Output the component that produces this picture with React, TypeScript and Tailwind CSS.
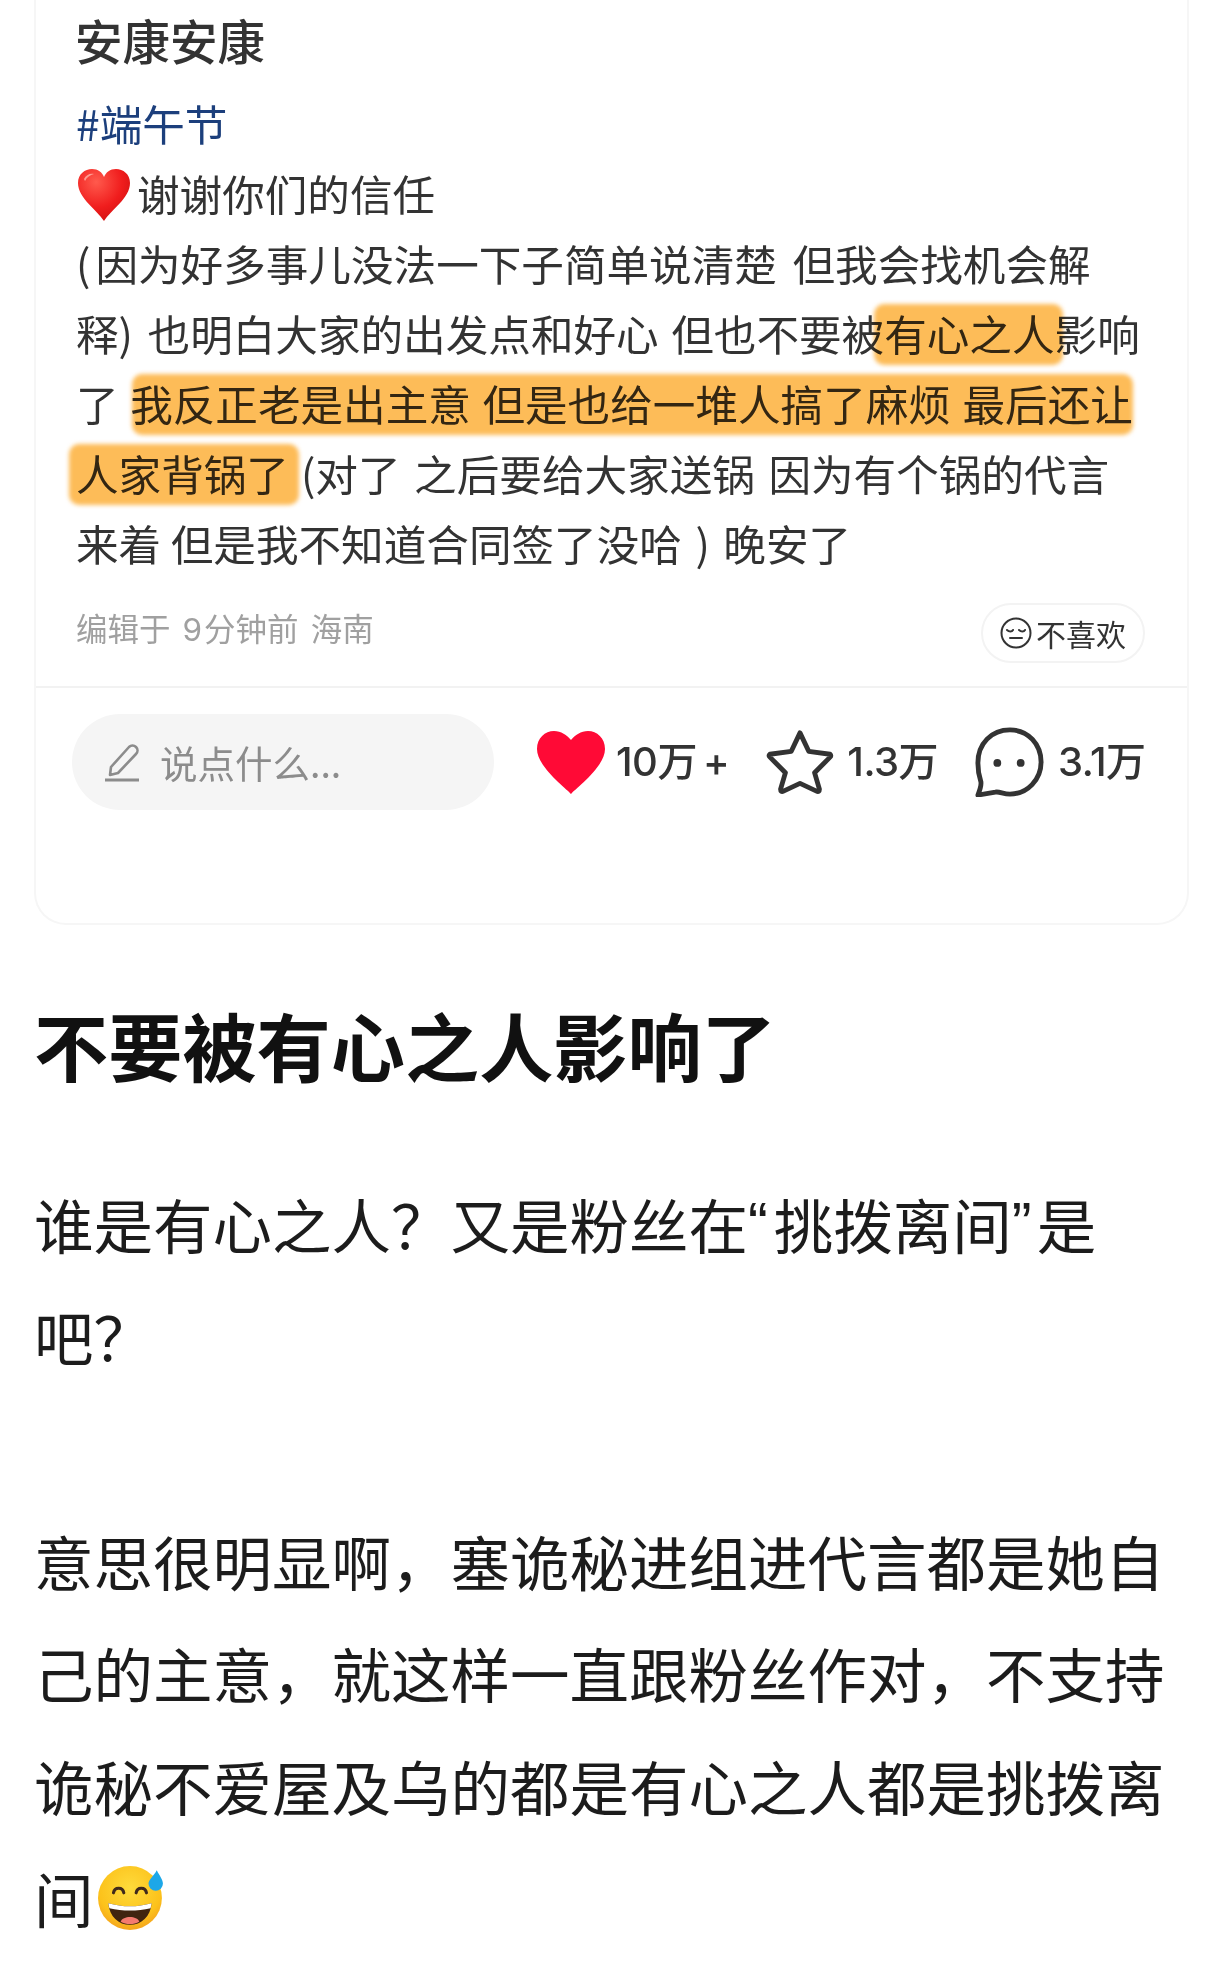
const cjk = "font-['Noto_Sans_CJK_SC','Noto_Sans',sans-serif]";
const num = "font-['Inter','Noto_Sans_CJK_SC',sans-serif]";

function Mark({ className, children }: { className: string; children: React.ReactNode }) {
  return (
    <span className="relative">
      {children}
      <span className={"absolute rounded-[10px] bg-[#fdbc58] mix-blend-multiply blur-[2px] " + className} />
    </span>
  );
}

function HeartEmoji() {
  return (
    <svg viewBox="0 0 54 54" className="h-[54px] w-[54px] shrink-0">
      <defs>
        <radialGradient id="hg" cx="0.35" cy="0.25" r="0.9">
          <stop offset="0" stopColor="#ff5a4d" />
          <stop offset="0.55" stopColor="#f01d1d" />
          <stop offset="1" stopColor="#c80d0d" />
        </radialGradient>
      </defs>
      <path d="M27 53C20 42 1 30 1 15 1 6 8 1 15 1c6 0 10 3 12 8 2-5 6-8 12-8 7 0 14 5 14 14 0 15-19 27-26 38z" fill="url(#hg)" />
      <path d="M7 11c2-4 6-6 10-5-4 1-7 3-9 7z" fill="#ff9d92" />
    </svg>
  );
}

function SweatEmoji() {
  return (
    <svg viewBox="0 0 66 62" className="ml-[3px] h-[64px] w-[68px] shrink-0">
      <defs>
        <radialGradient id="eg" cx="0.5" cy="0.35" r="0.65">
          <stop offset="0" stopColor="#fedb3c" />
          <stop offset="0.75" stopColor="#fcc21b" />
          <stop offset="1" stopColor="#f5a51c" />
        </radialGradient>
      </defs>
      <circle cx="32" cy="31" r="31" fill="url(#eg)" />
      <path d="M16 26c1-6 9-6 10 0M38 26c1-6 9-6 10 0" fill="none" stroke="#40291b" strokeWidth="3" strokeLinecap="round" />
      <path d="M11 36c14 4 28 4 42 0-1 13-10 21-21 21S12 49 11 36z" fill="#40240f" />
      <path d="M11 36c14 4 28 4 42 0l-1 5c-13 3-27 3-40 0z" fill="#fff" />
      <path d="M23 54c2-6 16-6 18 0-5 3-13 3-18 0z" fill="#f47b6f" />
      <path d="M58 4c3 6 6 9 6 13a7 7 0 0 1-14 0c0-4 5-7 8-13z" fill="#1da7e8" />
    </svg>
  );
}

function Pencil() {
  return (
    <svg viewBox="0 0 40 40" className="h-[40px] w-[40px] shrink-0" fill="none" stroke="#8c8c8c" strokeWidth="2.6" strokeLinecap="round" strokeLinejoin="round">
      <path d="M9 25 27 5c2-2 5-2 7 0s2 5 0 7L16 31l-8 2z" />
      <path d="M3 38h34" strokeWidth="3" strokeLinecap="butt" />
    </svg>
  );
}

function Face() {
  return (
    <svg viewBox="0 0 32 32" className="h-[32px] w-[32px] shrink-0" fill="none" stroke="#333" strokeWidth="2" strokeLinecap="round">
      <circle cx="16" cy="16" r="14.5" />
      <path d="M7 13c2 2 5 2 6 0M19 13c2 2 5 2 6 0M10 21h12" />
    </svg>
  );
}

function RedHeart() {
  return (
    <svg viewBox="0 0 70 64" className="h-[64px] w-[70px] shrink-0">
      <path d="M35 64C31 59 1 37 1 19 1 8 9 1 18 1c7 0 13 4 17 9 4-5 10-9 17-9 9 0 17 7 17 18 0 18-30 40-34 45z" fill="#ff0a36" />
    </svg>
  );
}

function Star() {
  return (
    <svg viewBox="0 0 70 68" className="h-[66px] w-[70px] shrink-0" fill="none" stroke="#333" strokeWidth="5" strokeLinejoin="round">
      <path d="M35 4 44 23 66 26c1 1 1 2 0 3L50 45 55 62c0 2-1 3-3 2L35 56 18 64c-2 1-3 0-3-2L20 45 4 29c-1-1-1-2 0-3L26 23z" />
    </svg>
  );
}

function Bubble() {
  return (
    <svg viewBox="0 0 70 72" className="h-[70px] w-[70px] shrink-0" fill="none" stroke="#333" strokeWidth="5" strokeLinejoin="round">
      <path d="M3 37C3 17 17 3 36 3s32 15 32 33-14 33-32 33c-7 0-11-3-15-2L3 70c2-5 4-10 3-14-2-6-3-12-3-19z" />
      <circle cx="23" cy="37" r="4" fill="#333" stroke="none" />
      <circle cx="47" cy="37" r="4" fill="#333" stroke="none" />
    </svg>
  );
}

const line = "h-[70px] flex items-center whitespace-pre";
const big = "h-[112.4px] flex items-center whitespace-pre";
const latinQuote = "font-['Liberation_Sans',sans-serif]";
const stat = num + " mb-[1px] text-[40px] font-medium tracking-[-0.5px] text-[#333]";

export default function App() {
  return (
    <div className={"min-h-[1977px] w-[1228px] overflow-hidden bg-white " + cjk}>
      <div className="ml-[34px] h-[925px] w-[1155px] rounded-b-[32px] border-x-2 border-b-2 border-[#f6f6f6] bg-white">
        <div className="pl-[40px] text-[42.6px] text-[#333]">
          <h2 className="-ml-[1px] h-[80px] flex items-center text-[47.5px] font-medium">安康安康</h2>
          <div className={line + " mt-[7.5px] text-[#1c3f7c]"}>#端午节</div>
          <div className={line}>
            <span className="ml-[1px] mr-[6px] mt-[4px]"><HeartEmoji /></span>
            <span>谢谢你们的信任</span>
          </div>
          <div className={line + " [word-spacing:6px]"}><span className="mr-[5px]">(</span>因为好多事儿没法一下子简单说清楚 但我会找机会解</div>
          <div className={line + " [word-spacing:3px]"}>
            <span>释<span className="mr-[2px]">)</span> 也明白大家的出发点和好心 但也不要被</span>
            <Mark className="-left-[10px] -right-[8px] top-[3px] -bottom-[1px]">有心之人</Mark>
            <span>影响</span>
          </div>
          <div className={line + " [word-spacing:2px]"}>
            <span>了 </span>
            <Mark className="left-[2px] right-0 top-[3px] -bottom-[1px]">我反正老是出主意 但是也给一堆人搞了麻烦 最后还让</Mark>
          </div>
          <div className={line + " [word-spacing:4px]"}>
            <Mark className="-left-[7px] -right-[10px] top-[3px] -bottom-[1px]">人家背锅了</Mark>
            <span className="ml-[12px]">(对了 之后要给大家送锅 因为有个锅的代言</span>
          </div>
          <div className={line}>来着 但是我不知道合同签了没哈<span className="mx-[4px]"> ) </span>晚安了</div>
        </div>

        <div className="flex h-[108.5px] items-center justify-between pl-[40px] pr-[42px] pt-[2.5px]">
          <span className="mb-[8px] text-[31.5px] text-[#a0a0a0] [word-spacing:5px]">编辑于 <span className={num + " mr-[2px] font-normal"}>9</span>分钟前 海南</span>
          <span className="flex h-[60px] w-[164px] items-center justify-center gap-[4px] rounded-full border-2 border-[#f3f3f3] text-[30px] text-[#333]">
            <Face />
            不喜欢
          </span>
        </div>

        <div className="h-[2px] bg-[#f2f2f2]" />

        <div className="flex items-center pl-[36px] pt-[26px]">
          <div className="flex h-[96px] w-[422px] items-center gap-[18px] rounded-full bg-[#f5f5f5] pl-[30px] text-[37.5px] text-[#8c8c8c]">
            <Pencil />
            说点什么...
          </div>
          <div className="ml-[42px] flex items-center gap-[10px]">
            <RedHeart />
            <span className={stat + " [word-spacing:-4px]"}>10万 +</span>
          </div>
          <div className="ml-[36px] flex items-center gap-[12px]">
            <Star />
            <span className={stat}>1.3万</span>
          </div>
          <div className="ml-[36px] flex items-center gap-[14px]">
            <Bubble />
            <span className={stat}>3.1万</span>
          </div>
        </div>
      </div>

      <div className="pl-[34px] text-[#1c1c1c]">
        <h1 className="mt-[72px] h-[94px] flex items-center text-[74.2px] font-bold text-[#111]">不要被有心之人影响了</h1>
        <div className="mt-[76px] text-[59.5px]">
          <div className={big}>谁是有心之人？又是粉丝在<span className={latinQuote + " mr-[6px]"}>“</span>挑拨离间<span className={latinQuote + " mr-[5px]"}>”</span>是</div>
          <div className={big}>吧？</div>
          <div className="h-[112.4px]" />
          <div className={big}>意思很明显啊，塞诡秘进组进代言都是她自</div>
          <div className={big}>己的主意，就这样一直跟粉丝作对，不支持</div>
          <div className={big}>诡秘不爱屋及乌的都是有心之人都是挑拨离</div>
          <div className={big}>间<SweatEmoji /></div>
        </div>
      </div>
    </div>
  );
}
